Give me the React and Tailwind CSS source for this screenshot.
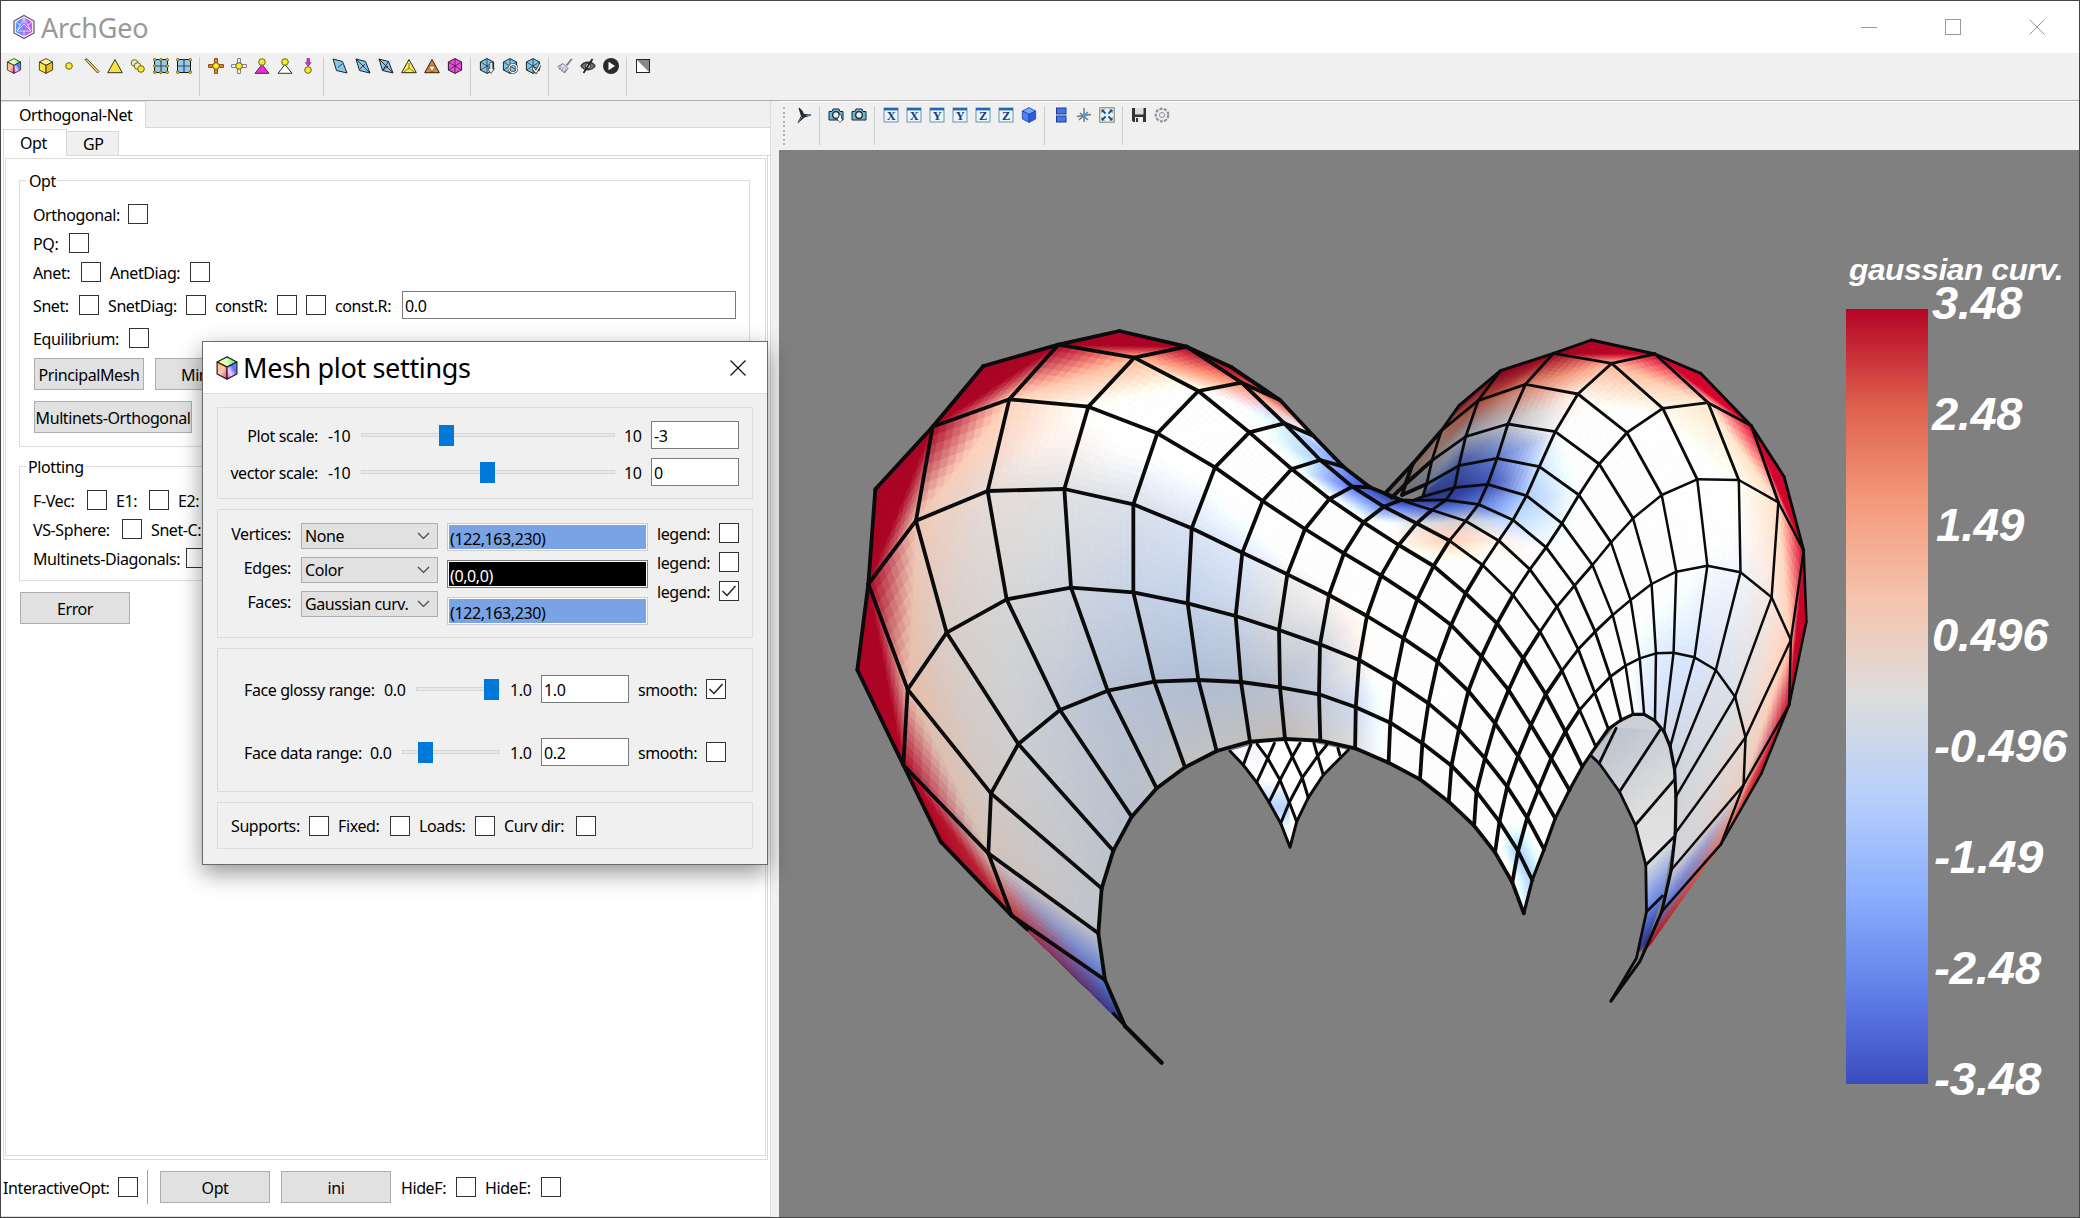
import React from "react";

/* ---------- shell mesh: vertices are [x, y, curvature, brightness] ---------- */
const tile = (ox, oy, sx) => (x, y, s = 0, g = 1.35) => ({ x: ox + x / sx, y: oy + y / 3, s, g });
const L = tile(840, 310, 3);
const M = tile(840, 650, 3);
const P = tile(1300, 310, 2.958);
const Q = tile(1300, 650, 2.958);

const ROWS = [
  { b: -9, v: [M(855, 1128, -1, 0.75), M(795, 990, -0.75, 0.9), M(775, 850, -0.05, 0.9), M(785, 715, -0.05, 0.9), M(820, 602, -0.08, 0.9), M(875, 500, -0.08, 0.89), M(950, 415, -0.06, 0.89), M(1035, 352, 0, 0.88), M(1130, 303, 0, 0.88), M(1230, 275, 0.02, 0.87), M(1335, 267, 0.05, 0.87), Q(60, 272, 0.02, 0.92), Q(163, 295, 0, 1), Q(262, 338, -0.05, 1.2), Q(355, 388), Q(440, 455), Q(515, 527), Q(577, 607), Q(628, 697, -0.1, 1.3), Q(662, 790, -0.15, 1.2)] },
  { b: -9, v: [M(835, 1108, -1, 0.6), M(515, 797, 0.88, 0.95), M(445, 610, 0.1, 0.92), M(453, 430, 0.04, 0.93), M(535, 282, -0.02, 0.94), M(660, 180, -0.07, 0.93), M(803, 122, -0.12, 0.91), M(943, 95, -0.14, 0.9), M(1075, 90, -0.16, 0.89), M(1203, 96, -0.14, 0.89), M(1320, 112, -0.1, 0.9), M(1437, 133, -0.1, 0.95), Q(165, 172, -0.12, 1.02), Q(267, 218, -0.1, 1.25), Q(362, 280), Q(448, 347), Q(522, 425), Q(590, 515, -0.1), Q(645, 603, -0.55, 1.25), Q(687, 690, -0.5, 1.2)] },
  { b: -8, v: [M(302, 575, 1, 0.98), M(190, 345, 1, 0.98), M(203, 118, 0.22, 0.95), L(320, 968, 0.06, 0.96), L(500, 868, 0, 0.97), L(693, 833, -0.06, 0.98), L(880, 847, -0.12, 0.98), L(1043, 880, -0.15, 0.98), L(1187, 918, -0.12, 0.98), L(1317, 960, -0.03, 0.98), L(1440, 1003, -0.05, 0.98), Q(175, 30, 0.03, 1.1), Q(280, 92, -0.02, 1.3), Q(380, 160), Q(470, 238), Q(547, 325), Q(613, 410), Q(672, 503, -0.15), Q(722, 598, -0.1)] },
  { b: -7, v: [L(52, 1080, 1, 0.94), L(85, 822, 1, 0.95), L(228, 632, 0.2, 1), L(443, 543, 0.05, 1.02), L(673, 537, -0.01, 1.02), L(880, 583, -0.06, 1.03), L(1055, 655, -0.1, 1.05), L(1207, 728, -0.1, 1.08), L(1342, 793, 0, 1.08), L(1467, 855, 0.02, 1.12), P(198, 918, 0.08, 1.2), P(306, 985), P(407, 1055), Q(498, 123), Q(577, 220), Q(645, 318), Q(705, 418), Q(755, 505)] },
  { b: -6, v: [L(106, 538, 1, 0.94), L(278, 350, 1, 0.95), L(508, 268, 0.25, 1.08), L(745, 290, 0.06, 1.2), L(952, 370, 0, 1.22), L(1125, 472, -0.02, 1.22), L(1268, 573, -0.05, 1.3), L(1395, 657, 0), P(130, 730), P(240, 797), P(347, 868), P(447, 945), P(537, 1040), Q(617, 120), Q(683, 225), Q(743, 325), Q(797, 420)] },
  { b: -5, v: [L(430, 168, 1, 0.94), L(655, 104, 1, 0.95), L(883, 143, 0.45, 1.15), L(1075, 243, 0.12), L(1228, 367, -0.05), L(1355, 477, -0.1), P(87, 567, -0.1), P(188, 637, -0.1), P(292, 705, 0.1, 1.2), P(395, 768, 0.08), P(490, 850), P(583, 940), P(660, 1045), Q(727, 133), Q(785, 245, -0.08, 1.28), Q(835, 350)] },
  { b: -4, v: [L(838, 63, 1, 0.95), L(1040, 110, 1, 0.97), L(1205, 218, 0.6, 1.1), L(1333, 340, -0.25, 1.15), P(60, 450, -0.45, 1.15), P(155, 530, -0.9, 1.2), P(248, 590, -0.75, 1.08), P(345, 640, 0, 1.02), P(442, 692, 0.3, 1.12), P(540, 765, 0.1), P(630, 855, 0.03, 1.18), P(710, 965), P(775, 1082), Q(827, 180, -0.1), Q(875, 290)] },
  { b: -3, v: [L(1175, 172, 1, 0.96), L(1320, 270, 0.85, 1.05), P(40, 378, 0, 1.1), P(128, 470, -0.7, 1.1), P(207, 532, -0.95, 1), P(298, 570, -1, 0.8), P(390, 600, -0.8, 0.95), P(490, 633, 0, 0.95), P(588, 692, 0.1, 1.15), P(680, 778, 0.04, 1.18), P(760, 890, 0.03, 1.2), P(823, 1018), Q(872, 128), Q(912, 237)] },
  { b: 2, v: [P(335, 571, -0.95, 0.7), P(432, 570, -0.98, 0.8), P(528, 583, -0.75, 0.95), P(630, 630, -0.3, 1.1), P(728, 712, -0.05, 1.18), P(812, 827, -0.02, 1.25), P(873, 965, 0), P(918, 1100, -0.05, 1.3), Q(950, 210)] },
  { b: 2, v: [P(363, 560, -0.9, 0.65), P(457, 533, -1, 0.75), P(555, 523, -0.95, 0.9), P(670, 557, -0.35, 1.05), P(775, 640, -0.1, 1.16), P(865, 765, -0.03, 1.3), P(925, 915), P(963, 1067, -0.07, 1.25), Q(985, 193, 0, 1.2)] },
  { b: 1, v: [P(302, 555, 0, 0.5), P(375, 522, -0.3, 0.58), P(470, 467, -0.85, 0.75), P(583, 445, -0.7, 0.88), P(708, 470, -0.22, 1.1), P(825, 555, -0.08, 1.2), P(920, 697), P(978, 870, -0.03, 1.28), P(1005, 1045, -0.1, 1.16), Q(1018, 193, -0.08, 1.1)] },
  { b: 0, v: [P(272, 562, 0, 0.5), P(312, 522, 0, 0.5), P(390, 452, 0.05, 0.6), P(490, 380, -0.12, 0.72), P(615, 342, -0.05, 0.88), P(755, 365, -0.02, 1.12), P(885, 462), P(985, 625), P(1040, 822, -0.05, 1.25), P(1053, 1030, -0.12, 1.12), Q(1050, 212, -0.1, 1.05)] },
  { b: 0, v: [P(252, 550, 0, 0.5), P(333, 462, 0.2, 0.55), P(418, 362, 0.5, 0.65), P(527, 272, 0.75, 0.75), P(667, 223, 0.55, 0.9), P(822, 252, 0.1, 1.15), P(967, 368), P(1070, 555), P(1113, 785, -0.05, 1.22), P(1105, 1028, -0.15, 1.1), Q(1077, 245, -0.1, 1.02)] },
  { b: 2, v: [P(470, 287, 1, 0.6), P(593, 182, 1, 0.7), P(750, 130, 1, 0.88), P(922, 160, 0.42, 1.1), P(1073, 295, 0.12, 1.2), P(1175, 508, 0, 1.3), P(1205, 767, -0.05, 1.15), P(1167, 1042, -0.14, 1.08), Q(1095, 290, -0.08, 1)] },
  { b: 4, v: [P(862, 90, 1, 0.95), P(1050, 132, 1, 1.18), P(1207, 278, 0.25, 1.18), P(1298, 510, 0.08, 1.2), P(1303, 787, -0.04, 1.12), P(1230, 1080, -0.08, 1.05), Q(1108, 358, -0.06, 0.98)] },
  { b: 5, v: [P(1185, 190, 1, 1.18), P(1335, 347, 1, 1.2), P(1415, 577, 0.28, 1.18), P(1395, 862, 0.06, 1.08), P(1287, 1160, -0.03, 1.02), Q(1112, 440, -0.04, 0.97)] },
  { b: 6, v: [P(1432, 500, 1, 1.18), P(1490, 722, 1, 1.15), P(1452, 990, 0.28, 1.1), Q(1318, 262, 0.08, 1.02), Q(1110, 550, -0.02, 0.97)] },
  { b: 7, v: [P(1498, 935, 1, 1.1), Q(1447, 165, 1, 1.1), Q(1312, 405, 0.15, 1), Q(1098, 660, -0.05, 0.97)] },
  { b: 8, v: [Q(1365, 370, 1, 1.1), Q(1245, 583, 0.7, 1.05), Q(1070, 785, -0.8, 0.95)] },
  { b: 9, v: [Q(1035, 885, 1, 1), Q(1012, 905, 0.9, 0.8)] },
];

const BACK_LEG = [
  [Q(862, 318, -0.05, 0.9), Q(885, 340, -0.05, 0.92), Q(945, 425, -0.03, 0.97), Q(992, 525, 0, 1.02), Q(1023, 645, 0, 1.03), Q(1025, 785, -0.7, 1), Q(1003, 905, -1, 0.8)],
  [Q(905, 262, -0.08, 0.85), Q(935, 235, -0.08, 0.9), Q(1065, 240, -0.06, 0.94), Q(1108, 388, 0, 1), Q(1105, 562, 0, 1.02), Q(1072, 738, -0.7, 0.95), Q(1025, 880, -1, 0.7)],
];

const COOLWARM = [[59, 76, 192], [98, 130, 234], [141, 176, 254], [184, 208, 249], [221, 221, 221], [245, 196, 173], [244, 154, 123], [222, 96, 77], [180, 4, 38]];
const tint = (s) => {
  const t = (Math.max(-1, Math.min(1, s)) + 1) * 4;
  const i = Math.min(7, Math.floor(t));
  return COOLWARM[i].map((a, k) => a + (COOLWARM[i + 1][k] - a) * (t - i));
};

/* each quad is two triangles sharing the q0-q2 diagonal; colour is linear inside each */
const N = 10;
const flat = (p) => [p.x, p.y, p.g, ...tint(p.s)];
const at = (q, u, v) =>
  u >= v
    ? q[0].map((a, k) => a + (q[1][k] - a) * u + (q[2][k] - q[1][k]) * v)
    : q[0].map((a, k) => a + (q[3][k] - a) * v + (q[2][k] - q[3][k]) * u);
const pt = (p) => `${p[0].toFixed(1)},${p[1].toFixed(1)}`;
const xy = (p) => `${p.x.toFixed(1)},${p.y.toFixed(1)}`;

function Quad({ q: corners }) {
  const q = corners.map(flat);
  const cells = [];
  const add = (pts) => {
    const m = pts[0].map((_, k) => pts.reduce((t, p) => t + p[k], 0) / pts.length);
    const c = `rgb(${[3, 4, 5].map((k) => Math.round(Math.min(255, m[k] * m[2]))).join(",")})`;
    cells.push(<polygon key={cells.length} fill={c} stroke={c} strokeWidth="0.8" strokeLinejoin="round" points={pts.map(pt).join(" ")} />);
  };
  for (let i = 0; i < N; i++)
    for (let j = 0; j < N; j++) {
      const p = [at(q, i / N, j / N), at(q, (i + 1) / N, j / N), at(q, (i + 1) / N, (j + 1) / N), at(q, i / N, (j + 1) / N)];
      if (i === j) {
        add([p[0], p[1], p[2]]);
        add([p[0], p[2], p[3]]);
      } else add(p);
    }
  return <g>{cells}</g>;
}

const vertex = (a, b) => (ROWS[a] ? ROWS[a].v[b - ROWS[a].b] : undefined);

function segments() {
  const out = [];
  for (let a = 0; a < 19; a++)
    for (let b = -9; b <= 10; b++) {
      const p = vertex(a, b);
      if (!p) continue;
      const w = b >= 7 && a > 8 ? 2.5 : b >= 4 && a > 5 ? 2.9 : b >= 2 && a > 6 ? 2.8 : 3.8;
      const hidden = a === 1 && b === -9;
      const r = vertex(a, b + 1);
      if (r && !hidden) out.push([p, r, w]);
      const d = a < 18 ? vertex(a + 1, b) : undefined;
      if (d && !hidden && !(a === 0 && b === -9)) out.push([p, d, b === 10 ? 3.2 : w]);
    }
  return out;
}

const Poly = ({ f, pts, w = 3 }) => (
  <polyline fill="none" stroke="#0b0b0b" strokeWidth={w} strokeLinejoin="round" strokeLinecap="round" points={pts.map(([x, y]) => xy(f(x, y))).join(" ")} />
);

function Mesh() {
  const quads = [];
  for (let a = 0; a < ROWS.length - 1; a++)
    for (let b = -9; b < 10; b++) {
      const q = [vertex(a, b), vertex(a, b + 1), vertex(a + 1, b + 1), vertex(a + 1, b)];
      if (q.every(Boolean)) quads.push(q);
    }
  const leg = [];
  for (let i = 0; i < 6; i++) leg.push([BACK_LEG[0][i], BACK_LEG[0][i + 1], BACK_LEG[1][i + 1], BACK_LEG[1][i]]);
  return (
    <svg width="1300" height="1067" viewBox="779 150 1300 1067" className="block">
      <defs>
        <linearGradient id="far" x1="0" y1="0" x2="0" y2="1">
          <stop offset="0" stopColor="#f4f4ff" />
          <stop offset="0.35" stopColor="#ffffff" />
          <stop offset="0.62" stopColor="#b4d2ff" />
          <stop offset="0.8" stopColor="#e8f6ff" />
          <stop offset="1" stopColor="#ffffff" />
        </linearGradient>
        <linearGradient id="bar" x1="0" y1="1" x2="0" y2="0">
          {COOLWARM.map((c, i) => (
            <stop key={i} offset={i / 8} stopColor={`rgb(${c[0]},${c[1]},${c[2]})`} />
          ))}
        </linearGradient>
      </defs>

      <polygon fill="#fff" points={[[1170, 303], [1210, 345], [1250, 397], [1287, 457], [1322, 520], [1350, 592], [1370, 515], [1405, 443], [1450, 375], [1500, 325], [1525, 300], [1335, 260]].map(([x, y]) => xy(M(x, y))).join(" ")} />
      <polygon fill="url(#far)" points={[[1170, 303], [1210, 345], [1250, 397], [1287, 457], [1322, 520], [1350, 592], [1348, 457], [1320, 390], [1283, 325], [1250, 280]].map(([x, y]) => xy(M(x, y))).join(" ")} />
      <Poly f={M} pts={[[1170, 303], [1210, 345], [1250, 397], [1287, 457], [1322, 520], [1350, 592], [1370, 515], [1405, 443], [1450, 375], [1500, 325], [1525, 300]]} />
      <Poly f={M} pts={[[1252, 283], [1283, 325], [1320, 390], [1348, 457], [1370, 515]]} />
      <Poly f={M} pts={[[1337, 275], [1357, 320], [1387, 383], [1405, 443]]} />
      <Poly f={M} pts={[[1422, 280], [1433, 318], [1450, 375]]} />
      <Poly f={M} pts={[[1232, 285], [1210, 345]]} />
      <Poly f={M} pts={[[1303, 280], [1283, 325], [1250, 397]]} />
      <Poly f={M} pts={[[1380, 280], [1357, 320], [1320, 390], [1287, 457]]} />
      <Poly f={M} pts={[[1460, 285], [1433, 318], [1387, 383], [1348, 457], [1322, 520]]} />
      <Poly f={Q} pts={[[112, 295], [118, 315]]} />

      <polygon fill="#cccfd5" points={[[905, 262], [950, 205], [985, 190], [1018, 190], [1050, 210], [1077, 245], [1095, 290], [1108, 390], [1040, 330], [935, 240]].map(([x, y]) => xy(Q(x, y))).join(" ")} />
      {leg.map((q, i) => <Quad key={i} q={q} />)}
      <Poly f={Q} w={2.8} pts={[[862, 318], [885, 340], [945, 425], [992, 525], [1023, 645], [1025, 785], [995, 925], [920, 1053]]} />
      {[[885, 340, 935, 235], [945, 425, 1065, 240], [992, 525, 1108, 388], [1023, 645, 1105, 562], [1025, 785, 1072, 738]].map(([a, b, c, d], i) => (
        <Poly key={i} f={Q} w={2.8} pts={[[a, b], [c, d]]} />
      ))}

      {quads.map((q, i) => <Quad key={i} q={q} />)}
      <g stroke="#0b0b0b" strokeLinecap="round">
        {segments().map(([p, q, w], i) => (
          <line key={i} x1={p.x} y1={p.y} x2={q.x} y2={q.y} strokeWidth={w} />
        ))}
      </g>
      <Poly f={M} w={4.2} pts={[[855, 1128], [965, 1238]]} />
      <Poly f={M} w={3} pts={[[515, 797], [562, 840]]} />
      <Poly f={M} w={3} pts={[[820, 1090], [855, 1128]]} />
      <Poly f={Q} w={3} pts={[[1070, 785], [1025, 890], [1005, 935], [920, 1053]]} />
      <Poly f={Q} w={2} pts={[[1245, 583], [1195, 640]]} />
      <Poly f={P} w={3} pts={[[252, 550], [298, 570]]} />

      <rect x="1846" y="309" width="82" height="775" fill="url(#bar)" />
      <g fill="#fff" fontFamily="'Liberation Sans', sans-serif" fontWeight="700" fontStyle="italic">
        <text x="1849" y="280" fontSize="29" textLength="214" lengthAdjust="spacingAndGlyphs">gaussian curv.</text>
        {[["3.48", 1932, 90], ["2.48", 1932, 90], ["1.49", 1936, 88], ["0.496", 1932, 116], ["-0.496", 1934, 133], ["-1.49", 1934, 109], ["-2.48", 1934, 107], ["-3.48", 1934, 107]].map(([t, x, w], i) => (
          <text key={t} x={x} y={319 + i * 110.8} fontSize="46" textLength={w} lengthAdjust="spacingAndGlyphs">{t}</text>
        ))}
      </g>
    </svg>
  );
}

/* ---------- toolbar glyphs ---------- */
const Cell = ({ children }) => (
  <span className="flex w-[23px] shrink-0 justify-center">
    <svg width="16" height="16" viewBox="0 0 16 16">{children}</svg>
  </span>
);
const Sep = () => <span className="mx-1 h-[39px] w-px shrink-0 bg-[#cdcdcd]" />;

const HEX = "8,0.6 14.6,4 14.6,12 8,15.4 1.4,12 1.4,4";
const Cube = ({ t, l, r, k = "#222" }) => (
  <g stroke={k} strokeWidth="0.8" strokeLinejoin="round">
    <polygon points="8,0.6 14.6,4 8,7.4 1.4,4" fill={t} />
    <polygon points="1.4,4 8,7.4 8,15.4 1.4,12" fill={l} />
    <polygon points="14.6,4 8,7.4 8,15.4 14.6,12" fill={r} />
  </g>
);
function RainbowCube({ size = 16 }) {
  return (
    <svg width={size} height={size} viewBox="0 0 16 16" className="shrink-0">
      <defs>
        <linearGradient id={`t${size}`}><stop offset="0" stopColor="#ff5" /><stop offset=".5" stopColor="#dfc" /><stop offset="1" stopColor="#3e4" /></linearGradient>
        <linearGradient id={`l${size}`} x1="0" y1="0" x2="1" y2="1"><stop offset="0" stopColor="#ffb850" /><stop offset=".5" stopColor="#ffc8b8" /><stop offset="1" stopColor="#f83868" /></linearGradient>
        <linearGradient id={`r${size}`} x1="1" y1="0" x2="0" y2="1"><stop offset="0" stopColor="#30c8ff" /><stop offset=".35" stopColor="#66f" /><stop offset=".65" stopColor="#f0d0ff" /><stop offset="1" stopColor="#f030e0" /></linearGradient>
      </defs>
      <Cube t={`url(#t${size})`} l={`url(#l${size})`} r={`url(#r${size})`} />
    </svg>
  );
}
const Dot = ({ x = 8, y = 8, r = 3.3, f = "#f4ea2c" }) => <circle cx={x} cy={y} r={r} fill={f} stroke="#6b6414" strokeWidth="1" />;
const Patch = ({ eight }) => (
  <>
    <rect x="1.5" y="1.5" width="13" height="13" fill="#8ecdf0" stroke="#111" />
    <path d="M8 1.5v13M1.5 8h13" stroke="#445" strokeWidth="1.2" />
    {[[1.8, 1.8], [14.2, 1.8], [1.8, 14.2], [14.2, 14.2]].concat(eight ? [[8, 1.8], [1.8, 8], [14.2, 8], [8, 14.2]] : []).map(([x, y]) => (
      <Dot key={`${x}-${y}`} x={x} y={y} r={1.3} />
    ))}
  </>
);
const Cross = ({ f, k }) => (
  <>
    <path d="M6.6 0.6h2.8v6h6v2.8h-6v6H6.6v-6h-6V6.6h6z" fill={f} stroke={k} />
    <Dot />
  </>
);
const Support = ({ f }) => (
  <>
    <path d="M8 6.5L15 15.3H1z" fill={f} stroke="#333" />
    <Dot y={4} />
  </>
);
const Kite = ({ d }) => (
  <>
    <path d="M1 1l9.5 2.5L15 15 4.5 12.5z" fill="#86c8ee" stroke="#222" strokeLinejoin="round" />
    <path d={d} stroke="#222" strokeWidth="0.9" fill="none" />
  </>
);
const Tri = ({ f, inner }) => (
  <>
    <path d="M8 1.5L15.3 14.7H.7z" fill={f} stroke="#222" />
    {inner ? <path d="M4.5 8h7L8 14z" fill="#fff4d8" stroke="#222" strokeWidth=".6" /> : <path d="M8 5v5M8 10l-5 4M8 10l5 4" stroke="#5c5510" strokeWidth=".8" />}
  </>
);
const HexMesh = ({ f }) => (
  <>
    <polygon points={HEX} fill={f} stroke="#222" />
    <path d="M8 .6v14.8M1.4 4l13.2 8M14.6 4L1.4 12" stroke="#222" strokeWidth=".7" />
  </>
);
const Axis = ({ t }) => (
  <Cell>
    <rect x="1" y="1" width="14" height="14" fill="#eaf5fc" stroke="#6b93ad" />
    <rect x="1" y="1" width="14" height="2.4" fill="#2566b4" />
    <text x="8" y="13.2" textAnchor="middle" fontFamily="'Liberation Serif', serif" fontWeight="700" fontSize="12.5" fill="#173d70">{t}</text>
  </Cell>
);
const Camera = ({ spin }) => (
  <Cell>
    <path d="M1 4.5h3l1-2.5h6l1 2.5h3v8.5H1z" fill="#66b9dd" stroke="#222" />
    <circle cx="8" cy="8" r="3.3" fill="#dff0f8" stroke="#222" strokeWidth="1.3" />
    {spin && <path d="M7 12c3 0 4-1 4-4h2.5v4H15l-3 3.5L9 12z" fill="#fff" stroke="#333" strokeWidth=".7" />}
  </Cell>
);

const Toolbar = () => (
  <div className="flex h-[47px] items-start bg-[#f0f0f0] pl-px pt-1">
    <div className="flex items-start [&>span:not(.w-px)]:pt-px">
      <span className="flex w-[23px] justify-center"><RainbowCube /></span>
      <Sep />
      <Cell><Cube t="#fff29a" l="#fbe53e" r="#e9bd1d" /></Cell>
      <Cell><Dot /></Cell>
      <Cell><path d="M1 1.5L3 .8 15 13.5 13.5 15z" fill="#f3e53a" stroke="#333" strokeWidth=".9" /></Cell>
      <Cell><path d="M8 1.5L15.3 14.7H.7z" fill="#f9e338" stroke="#333" /></Cell>
      <Cell><Dot x={4.5} y={5} f="#f0edc0" /><Dot x={7.5} y={8} f="#f0edc0" /><Dot x={11} y={11} /></Cell>
      <Cell><Patch eight /></Cell>
      <Cell><Patch /></Cell>
      <Sep />
      <Cell><Cross f="#f08a28" k="#8a4208" /></Cell>
      <Cell><Cross f="#fff" k="#777" /></Cell>
      <Cell><Support f="#f428e0" /></Cell>
      <Cell><Support f="#fff" /></Cell>
      <Cell><path d="M7 .5h2.4v4.2H11L8.2 8.5 5.4 4.7H7z" fill="#e82bd8" stroke="#6b1464" strokeWidth=".6" /><Dot y={12} /></Cell>
      <Sep />
      <Cell><Kite d="M6 9.5l4-3.5" /></Cell>
      <Cell><Kite d="M1 1l14 14M5 11l5-5" /></Cell>
      <Cell><Kite d="M1 1l14 14M4.5 12.5l6-9M4.5 12.5L10 8" /></Cell>
      <Cell><Tri f="#fdee57" /></Cell>
      <Cell><Tri f="#f0871c" inner /></Cell>
      <Cell><HexMesh f="#ee49e2" /></Cell>
      <Sep />
      <Cell><HexMesh f="#7dc4ea" /><path d="M10.8 4.5h2.5v6h2L12 15.5l-3-5h1.8z" fill="#fff" stroke="#333" strokeWidth=".7" /></Cell>
      <Cell><HexMesh f="#7dc4ea" /><circle cx="11" cy="10.5" r="4" fill="none" stroke="#333" strokeWidth="2.4" /><circle cx="11" cy="10.5" r="4" fill="none" stroke="#fff" strokeWidth="1.3" /></Cell>
      <Cell><HexMesh f="#7dc4ea" /><path d="M8 10l3 4 4.5-8" fill="none" stroke="#333" strokeWidth="3" /><path d="M8 10l3 4 4.5-8" fill="none" stroke="#fff" strokeWidth="1.4" /></Cell>
      <Sep />
      <Cell><path d="M14.8 1L9.5 7.5" stroke="#77758a" strokeWidth="1.8" /><path d="M6 5.5l5 5-3.5 4.5L1 8.5z" fill="#dddcec" stroke="#77758a" /><path d="M4 7.5L2 12M6.5 9l-2 4.5M9 10.5l-2 4" stroke="#77758a" strokeWidth=".7" /></Cell>
      <Cell><path d="M1 8c3-5 11-5 14 0-3 5-11 5-14 0z" fill="#777" stroke="#333" strokeWidth="1.3" /><circle cx="8" cy="8" r="2.6" fill="#ddd" stroke="#333" /><path d="M12.5 1L3.5 15" stroke="#222" strokeWidth="1.8" /></Cell>
      <Cell><circle cx="8" cy="8" r="8" fill="#2b2b2b" /><path d="M5.5 3.8L12 8l-6.5 4.2z" fill="#fff" /></Cell>
      <Sep />
      <Cell><rect x="1.5" y="1.5" width="13" height="13" fill="#888" stroke="#222" /><path d="M2 2v12h12z" fill="#fff" /></Cell>
    </div>
  </div>
);

const ViewBar = () => (
  <div className="flex h-[49px] items-start border-t border-[#fff] bg-[#f0f0f0] pl-1 pt-1">
    <span className="mr-[7px] mt-px h-[40px] w-[2px] bg-[repeating-linear-gradient(to_bottom,#b4b4b4_0_2px,#f0f0f0_2px_4.5px)]" />
    <div className="flex items-start [&>span:not(.w-px)]:pt-[1px]">
      <Cell><path d="M3 1c2 1 4 4 4.5 6.500L15 8 8.500 10 2 15.500 5.500 9z" fill="#1d2a4c" stroke="#222" strokeWidth="1" /><path d="M10 8.500l5-.5" stroke="#4ac" strokeWidth="1.200" /><path d="M2 15l4-5" stroke="#8a9a4a" /></Cell>
      <Sep />
      <Camera spin />
      <Camera />
      <Sep />
      {["X", "X", "Y", "Y", "Z", "Z"].map((t, i) => <Axis key={i} t={t} />)}
      <Cell><Cube t="#7ba4ff" l="#4a80fb" r="#2a5ae6" k="#2040a0" /></Cell>
      <Sep />
      <Cell><rect x="3.5" y="1" width="9.5" height="6" fill="#4474ea" stroke="#1c3c94" /><rect x="3.5" y="9" width="9.5" height="6" fill="#4474ea" stroke="#1c3c94" /></Cell>
      <Cell><path d="M8 1v14M1 9.5l14-2M3 13l9-8M4 6l8 7" stroke="#777" strokeWidth="1.5" /><path d="M8 4.500l3 4.500-4 2z" fill="#38a0f0" /></Cell>
      <Cell><rect x=".8" y=".8" width="14.4" height="14.4" fill="#e8f4fb" stroke="#8a7a5a" /><path d="M3 3l3.5 3.5M13 3L9.5 6.5M3 13l3.5-3.5M13 13L9.5 9.5" stroke="#1f5487" strokeWidth="1.8" /><path d="M2.5 6V2.5H6zM13.5 6V2.5H10zM2.5 10v3.5H6zM13.5 10v3.5H10z" fill="#1f5487" /></Cell>
      <Sep />
      <Cell><path d="M1 1h14v14H2.5L1 13.5z" fill="#333" /><rect x="4" y="1" width="8.5" height="6.5" fill="#ddd" /><rect x="4" y="10" width="8" height="5" fill="#eee" /><rect x="5" y="11" width="2" height="4" fill="#333" /></Cell>
      <Cell><circle cx="8" cy="8" r="6.3" fill="#e4e4ea" stroke="#8d8d9a" strokeWidth="2.2" strokeDasharray="3 1.4" /><circle cx="8" cy="8" r="5.2" fill="#e9e9ef" /><circle cx="8" cy="8" r="2.5" fill="#f8f8f8" stroke="#8d8d9a" /></Cell>
    </div>
  </div>
);

/* ---------- form pieces ---------- */
const Box = ({ on }) => (
  <span className="flex h-5 w-5 shrink-0 items-center justify-center border border-[#333] bg-white">
    {on && <svg width="16" height="14" viewBox="0 0 16 14" className="shrink-0"><path d="M1.5 7l4.5 4.5L14.5 2" fill="none" stroke="#222" strokeWidth="1.5" /></svg>}
  </span>
);
const Lab = ({ w, children, className = "" }) => (
  <span className={`shrink-0 whitespace-nowrap pt-px leading-5 ${w || ""} ${className}`}>{children}</span>
);
const Btn = ({ children, className = "" }) => (
  <button className={`flex h-8 shrink-0 items-center justify-center whitespace-nowrap border border-[#adadad] bg-[#e1e1e1] pt-[2px] ${className}`}>{children}</button>
);
const Field = ({ children, className = "" }) => (
  <span className={`flex h-7 shrink-0 items-center border border-[#7a7a7a] bg-white pl-[2px] pt-[2px] ${className}`}>{children}</span>
);
const Track = ({ w, handle }) => (
  <span className={`flex h-[21px] shrink-0 items-center ${w}`}>
    <span className="flex h-1 w-full items-center border border-[#d6d6d6] bg-[#e7eaea]">
      <span className={`h-[21px] w-[15px] shrink-0 bg-[#0078d7] ${handle}`} />
    </span>
  </span>
);
const Select = ({ children }) => (
  <span className="flex h-[26px] w-[137px] items-center justify-between border border-[#adadad] bg-[#e1e1e1] pl-[3px] pr-[7px]">
    {children}
    <svg width="13" height="8" viewBox="0 0 13 8"><path d="M1 1l5.5 5.5L12 1" fill="none" stroke="#444" strokeWidth="1.2" /></svg>
  </span>
);
const Group = ({ className = "", children }) => <div className={`border border-[#dcdcdc] ${className}`}>{children}</div>;

function Dialog() {
  return (
    <div className="absolute left-[201px] top-[340px] flex h-[524px] w-[566px] flex-col border border-[#6a6a6a] bg-[#f0f0f0] shadow-[0_8px_22px_rgba(0,0,0,0.42)]">
      <div className="flex h-[52px] shrink-0 items-center border-b border-[#dcdcdc] bg-white pl-3">
        <RainbowCube size={24} />
        <span className="ml-[4px] mt-px grow text-[27px] leading-8 tracking-[-0.35px]">Mesh plot settings</span>
        <svg width="16" height="16" viewBox="0 0 16 16" className="mr-[21px]"><path d="M.5.5l15 15M15.5.5l-15 15" stroke="#111" strokeWidth="1.2" /></svg>
      </div>
      <div className="flex flex-col px-[14px] pt-[13px]">
        <Group className="flex h-[92px] flex-col gap-[9px] pt-[13px]">
          {[["Plot scale:", "ml-[77px]", "-3"], ["vector scale:", "ml-[118px]", "0"]].map(([t, m, v]) => (
            <div key={t} className="flex h-7 items-center">
              <Lab w="w-[100px]" className="text-right">{t}</Lab>
              <Lab w="w-[43px]" className="pl-[10px]">-10</Lab>
              <Track w="w-[254px]" handle={m} />
              <Lab w="w-[36px]" className="pl-[9px]">10</Lab>
              <Field className="w-[88px]">{v}</Field>
            </div>
          ))}
        </Group>
        <Group className="mt-[10px] flex h-[129px] items-start pt-[13px]">
          <div className="flex w-[73px] flex-col gap-[8px] text-right">
            {["Vertices:", "Edges:", "Faces:"].map((t) => <Lab key={t} className="h-[26px] pt-[3px]">{t}</Lab>)}
          </div>
          <div className="ml-[10px] flex flex-col gap-[8px]">
            {["None", "Color", "Gaussian curv."].map((t) => <Select key={t}>{t}</Select>)}
          </div>
          <div className="ml-[9px] flex flex-col gap-[9px]">
            {[["(122,163,230)", "bg-[#7aa3e6]", "border-[#ccc]"], ["(0,0,0)", "bg-black text-white", "border-[#7a7a7a]"], ["(122,163,230)", "bg-[#7aa3e6]", "border-[#ccc]"]].map(([t, c, k], i) => (
              <span key={i} className={`flex h-7 w-[201px] border bg-white p-px ${k}`}>
                <span className={`flex grow items-center pl-px pt-[3px] ${c}`}>{t}</span>
              </span>
            ))}
          </div>
          <div className="ml-[9px] flex flex-col gap-[9px]">
            {[0, 1, 2].map((i) => (
              <div key={i} className="flex h-5 items-center"><Lab w="w-[62px]">legend:</Lab><Box on={i === 2} /></div>
            ))}
          </div>
        </Group>
        <Group className="mt-[10px] flex h-[144px] flex-col gap-[35px] pl-[26px] pt-[26px]">
          <div className="flex h-7 items-center">
            <Lab w="w-[140px]">Face glossy range:</Lab><Lab w="w-8">0.0</Lab>
            <Track w="w-[84px]" handle="ml-[67px]" />
            <Lab w="w-[41px]" className="pl-[10px]">1.0</Lab><Field className="w-[88px]">1.0</Field>
            <Lab w="w-[77px]" className="pl-[9px]">smooth:</Lab><Box on />
          </div>
          <div className="flex h-7 items-center">
            <Lab w="w-[126px]">Face data range:</Lab><Lab w="w-8">0.0</Lab>
            <Track w="w-[98px]" handle="ml-[15px]" />
            <Lab w="w-[41px]" className="pl-[10px]">1.0</Lab><Field className="w-[88px]">0.2</Field>
            <Lab w="w-[77px]" className="pl-[9px]">smooth:</Lab><Box />
          </div>
        </Group>
        <Group className="mt-[10px] flex h-[47px] items-center pl-[13px]">
          <Lab w="w-[78px]">Supports:</Lab><Box />
          <Lab w="w-[61px]" className="pl-[9px]">Fixed:</Lab><Box />
          <Lab w="w-[65px]" className="pl-[9px]">Loads:</Lab><Box />
          <Lab w="w-[81px]" className="pl-[9px]">Curv dir:</Lab><Box />
        </Group>
      </div>
    </div>
  );
}

function LeftPanel() {
  return (
    <div className="flex h-[1116px] w-[770px] shrink-0 flex-col border-r border-[#dcdcdc] bg-white">
      <div className="flex h-[27px] shrink-0 bg-[#f0f0f0]">
        <span className="w-[145px] border-r border-t border-[#d9d9d9] bg-white pl-[18px] leading-[27px]">Orthogonal-Net</span>
        <span className="grow border-b border-[#d9d9d9]" />
      </div>
      <div className="flex h-[28px] shrink-0 items-end pl-[2px] pt-px">
        <span className="h-[27px] w-[64px] border-l border-r border-t border-[#d9d9d9] pl-4 leading-[26px]">Opt</span>
        <span className="h-[25px] w-[52px] border-b border-r border-t border-[#d9d9d9] bg-[#f0f0f0] pl-4 leading-[25px]">GP</span>
        <span className="grow border-b border-[#d9d9d9]" />
      </div>
      <div className="mx-[2px] h-[1004px] shrink-0 border-x border-b border-[#d9d9d9] px-px pb-[3px] pt-[2px]">
        <div className="h-full border border-[#dcdcdc] pl-[13px] pr-[15px] pt-[21px]">
          <Group className="h-[267px]">
            <span className="-mt-3 ml-[6px] block h-6 w-[31px] bg-white pl-[3px] leading-6">Opt</span>
            <div className="flex flex-col pl-[13px]">
              <div className="mt-[11px] flex h-5"><Lab w="w-[95px]">Orthogonal:</Lab><Box /></div>
              <div className="mt-[9px] flex h-5"><Lab w="w-[36px]">PQ:</Lab><Box /></div>
              <div className="mt-[9px] flex h-5"><Lab w="w-[48px]">Anet:</Lab><Box /><Lab w="w-[89px]" className="pl-[9px]">AnetDiag:</Lab><Box /></div>
              <div className="mt-[8px] flex h-[30px] items-center">
                <Lab w="w-[46px]">Snet:</Lab><Box /><Lab w="w-[87px]" className="pl-[9px]">SnetDiag:</Lab><Box />
                <Lab w="w-[71px]" className="pl-[9px]">constR:</Lab><Box /><span className="w-[9px]" /><Box />
                <Lab w="w-[76px]" className="pl-[9px]">const.R:</Lab><Field className="w-[334px]">0.0</Field>
              </div>
              <div className="mt-[8px] flex h-5"><Lab w="w-[96px]">Equilibrium:</Lab><Box /></div>
              <div className="mt-[10px] flex gap-[11px] pl-px"><Btn className="w-[110px]">PrincipalMesh</Btn><Btn className="w-[110px]">Minimal</Btn></div>
              <div className="mt-[11px] flex pl-px"><Btn className="w-[158px]">Multinets-Orthogonal</Btn></div>
            </div>
          </Group>
          <Group className="mt-[19px] h-[115px]">
            <span className="-mt-3 ml-[6px] block h-6 w-[59px] bg-white pl-[2px] leading-6">Plotting</span>
            <div className="flex flex-col pl-[13px]">
              <div className="mt-[11px] flex h-5"><Lab w="w-[54px]">F-Vec:</Lab><Box /><Lab w="w-[42px]" className="pl-[9px]">E1:</Lab><Box /><Lab className="pl-[9px]">E2:</Lab></div>
              <div className="mt-[9px] flex h-5"><Lab w="w-[89px]">VS-Sphere:</Lab><Box /><Lab className="pl-[9px]">Snet-C:</Lab></div>
              <div className="mt-[9px] flex h-5"><Lab w="w-[153px]">Multinets-Diagonals:</Lab><Box /></div>
            </div>
          </Group>
          <Btn className="ml-px mt-[11px] w-[110px]">Error</Btn>
        </div>
      </div>
      <div className="flex grow items-center border-b border-[#dcdcdc] pb-[2px] pl-[2px]">
        <Lab w="w-[115px]">InteractiveOpt:</Lab><Box />
        <span className="ml-[9px] mr-[12px] h-[34px] w-px bg-[#a0a0a0]" />
        <Btn className="w-[110px]">Opt</Btn><Btn className="ml-[11px] w-[110px]">ini</Btn>
        <Lab w="w-[65px]" className="pl-[10px]">HideF:</Lab><Box />
        <Lab w="w-[65px]" className="pl-[9px]">HideE:</Lab><Box />
      </div>
    </div>
  );
}

export default function App() {
  return (
    <div className="relative flex h-[1218px] w-[2080px] flex-col overflow-hidden border border-[#444] bg-[#f0f0f0] font-['Noto_Sans','Open_Sans',sans-serif] text-[16px] tracking-[-0.4px] text-black">
      <header className="flex h-[52px] shrink-0 items-center bg-white pl-[11px]">
        <svg width="24" height="26" viewBox="0 0 24 26" className="-mt-px">
          <defs><linearGradient id="logo"><stop offset="0" stopColor="#4f9bff" /><stop offset="1" stopColor="#e04ef4" /></linearGradient></defs>
          <path d="M12 1.5l10 5.5v12L12 24.500 2 19V7z" fill="#fff" stroke="#555" strokeWidth="1.2" />
          <path d="M12 3.5l8.2 4.5v10L12 22.5 3.8 18V8z" fill="url(#logo)" />
          <path d="M12 4.5L5 17h14zM12 4.5v5M5 17l7-7 7 7M12 17v5M4 8l4 3M20 8l-4 3" fill="none" stroke="#eef" strokeWidth=".8" />
        </svg>
        <span className="ml-[5px] mt-[2px] grow text-[27px] leading-8 tracking-[-0.2px] text-[#999]">ArchGeo</span>
        <div className="-mt-px flex items-center gap-[68px] pr-[34px] text-[#999]">
          <svg width="16" height="16" viewBox="0 0 16 16"><path d="M0 8.5h16" stroke="currentColor" /></svg>
          <svg width="16" height="16" viewBox="0 0 16 16"><rect x=".5" y=".5" width="15" height="15" fill="none" stroke="currentColor" /></svg>
          <svg width="16" height="16" viewBox="0 0 16 16"><path d="M.5.5l15 15M15.5.5l-15 15" stroke="currentColor" /></svg>
        </div>
      </header>
      <Toolbar />
      <div className="h-px shrink-0 bg-[#b0b0b0]" />
      <div className="flex min-h-0 grow">
        <LeftPanel />
        <main className="ml-[8px] flex grow flex-col bg-[#808080]">
          <ViewBar />
          <Mesh />
        </main>
      </div>
      <Dialog />
    </div>
  );
}
